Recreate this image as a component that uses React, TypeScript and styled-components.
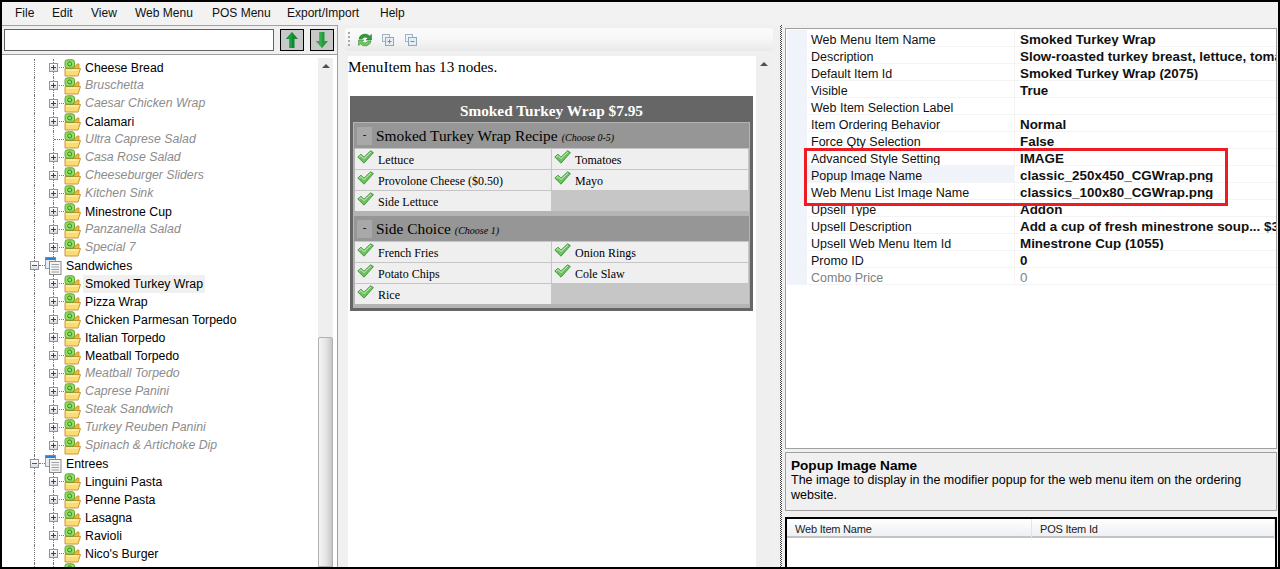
import React from 'react';
import styled, { createGlobalStyle } from 'styled-components';

const GlobalStyle = createGlobalStyle`
  html, body {
    margin: 0;
    padding: 0;
    background: #000;
  }
  * {
    box-sizing: border-box;
  }
`;

const uiFont = `'Liberation Sans', Arial, sans-serif`;
const serifFont = `'Liberation Serif', 'Times New Roman', serif`;

const Window = styled.div`
  width: 1280px;
  height: 569px;
  border: 2px solid #000;
  background: #f0f0f0;
  display: flex;
  flex-direction: column;
  overflow: hidden;
  font-family: ${uiFont};
  font-size: 12px;
  color: #000;
`;

const MenuBar = styled.div`
  flex: none;
  height: 23px;
  display: flex;
  align-items: center;
  padding: 0 0 2px 13px;
  background: #f2f2f2;
`;

const MenuLabel = styled.span<{ $w: number }>`
  width: ${(p) => p.$w}px;
  font-size: 12px;
  color: #111;
`;

const Main = styled.div`
  flex: 1;
  min-height: 0;
  display: flex;
`;

const LeftPane = styled.div`
  flex: none;
  width: 336px;
  display: flex;
  flex-direction: column;
  border-top: 1px solid #a0a0a0;
  border-right: 1px solid #a0a0a0;
  background: #fff;
`;

const SearchRow = styled.div`
  flex: none;
  height: 29px;
  display: flex;
  align-items: flex-start;
  padding: 3px 0 0 2px;
  background: #f0f0f0;
  border-bottom: 1px solid #a0a0a0;
`;

const SearchInput = styled.div`
  width: 270px;
  height: 22px;
  background: #fff;
  border: 1px solid #646464;
`;

const ArrowButton = styled.button<{ $gap: number }>`
  width: 24px;
  height: 22px;
  margin-left: ${(p) => p.$gap}px;
  padding: 0;
  display: flex;
  align-items: center;
  justify-content: center;
  background: #c8c8c8;
  border: 1px solid #000;
`;

const TreeArea = styled.div`
  flex: 1;
  min-height: 0;
  display: flex;
  overflow: hidden;
  padding-top: 3px;
  padding-right: 4px;
`;

const Tree = styled.div`
  flex: 1;
  min-width: 0;
  position: relative;
  overflow: hidden;
  padding-top: 1px;
`;

const TreeRow = styled.div<{ $group?: boolean }>`
  position: relative;
  height: 18px;
  display: flex;
  align-items: center;
  padding-left: ${(p) => (p.$group ? 43 : 62)}px;

  /* vertical connector of the root branch */
  &::before {
    content: '';
    position: absolute;
    left: 32px;
    top: 0;
    bottom: 0;
    border-left: 1px dotted #777;
  }

  /* vertical connector of the child branch */
  &::after {
    content: '';
    position: absolute;
    left: 51px;
    top: 0;
    bottom: 0;
    border-left: 1px dotted #777;
    display: ${(p) => (p.$group ? 'none' : 'block')};
  }
`;

const Expander = styled.span<{ $group?: boolean }>`
  position: absolute;
  z-index: 1;
  left: ${(p) => (p.$group ? 28 : 47)}px;
  top: 4px;
  width: 9px;
  height: 9px;
  background: linear-gradient(#fff, #d9dde4);
  border: 1px solid #949494;

  &::before {
    content: '';
    position: absolute;
    left: 1px;
    top: 3px;
    width: 5px;
    height: 1px;
    background: ${(p) => (p.$group ? '#555' : '#2b3f7a')};
  }
`;

const ExpanderPlus = styled.span`
  position: absolute;
  left: 3px;
  top: 1px;
  width: 1px;
  height: 5px;
  background: #2b3f7a;
`;

const Stub = styled.span<{ $group?: boolean }>`
  position: absolute;
  left: ${(p) => (p.$group ? 37 : 52)}px;
  top: 8px;
  width: ${(p) => (p.$group ? 6 : 10)}px;
  border-top: 1px dotted #777;
`;

const ItemLabel = styled.span<{ $off?: boolean; $selected?: boolean }>`
  margin-left: 2px;
  height: 18px;
  line-height: ${(p) => (p.$off ? 16 : 18)}px;
  padding: 0 2px;
  white-space: nowrap;
  font-size: 12.3px;
  font-style: ${(p) => (p.$off ? 'italic' : 'normal')};
  color: ${(p) => (p.$off ? '#8c8c8c' : '#000')};
  background: ${(p) => (p.$selected ? '#f0f0f0' : 'transparent')};
  position: relative;
  z-index: 1;
`;

const IconSlot = styled.span`
  width: 17px;
  height: 18px;
  display: block;
  position: relative;
  z-index: 1;
  flex: none;
`;

const VScroll = styled.div`
  flex: none;
  width: 15px;
  position: relative;
  background: #efefef;
`;

const ScrollArrow = styled.span`
  position: absolute;
  left: 4px;
  top: 6px;
  width: 0;
  height: 0;
  border-left: 4px solid transparent;
  border-right: 4px solid transparent;
  border-bottom: 4px solid #505050;
`;

const ScrollThumb = styled.span<{ $top: number }>`
  position: absolute;
  left: 0;
  right: 0;
  top: ${(p) => p.$top}px;
  bottom: 0;
  background: linear-gradient(90deg, #f4f4f4, #e4e4e4 55%, #c6c6c6);
  border: 1px solid #b0b0b0;
  border-radius: 2px 2px 0 0;
`;

const CenterPane = styled.div`
  flex: none;
  width: 442px;
  display: flex;
  flex-direction: column;
  padding: 3px 7px 0 7px;
  background: #f0f0f0;
`;

const ToolBar = styled.div`
  flex: none;
  width: 428px;
  height: 23px;
  display: flex;
  align-items: center;
  gap: 8px;
  padding-left: 3px;
  border-radius: 3px;
  background: linear-gradient(#fbfbfb, #f6f6f6 50%, #e9e9e9);
`;

const Grip = styled.span`
  width: 2px;
  height: 15px;
  margin-right: -1px;
  background: repeating-linear-gradient(#a8a8a8 0 2px, transparent 2px 4px);
`;

const ToolIcon = styled.svg<{ $gap?: number }>`
  flex: none;
  margin-left: ${(p) => p.$gap ?? 0}px;
`;

const CenterBody = styled.div`
  flex: 1;
  min-height: 0;
  display: flex;
  margin: 5px 0 0 3px;
  width: 423px;
`;

const Preview = styled.div`
  flex: 1;
  min-width: 0;
  padding: 2px 3px 0 0;
  background: #fff;
  font-family: ${serifFont};
`;

const NodeCount = styled.div`
  font-size: 15.2px;
  line-height: 18px;
  margin-bottom: 20px;
`;

const MenuCard = styled.div`
  margin-left: 2px;
  border: 3px solid #666;
  background: #b4b4b4;
`;

const CardTitle = styled.div`
  height: 26px;
  margin: -3px -3px 0;
  background: #666;
  color: #fff;
  font-weight: 700;
  font-size: 15.3px;
  line-height: 29px;
  text-align: center;
`;

const GroupHead = styled.div`
  height: 26px;
  margin: 0 1px;
  display: flex;
  align-items: center;
  gap: 4px;
  padding-left: 3px;
  background: #969696;
  border-top: 1px solid #b4b4b4;
`;

const Collapse = styled.span`
  width: 15px;
  height: 18px;
  background: #a8a8a8;
  text-align: center;
  font-size: 11px;
  line-height: 14px;
`;

const GroupTitle = styled.span`
  font-size: 15.4px;
  color: #000;
`;

const GroupNote = styled.span`
  font-size: 10px;
  font-style: italic;
  margin-left: 4px;
`;

const ChoiceGrid = styled.div`
  display: grid;
  grid-template-columns: 196px 196px;
  gap: 1px;
  margin: 0 1px 4px 2px;
  padding-top: 1px;
  background: #c6c6c6;
`;

const Choice = styled.div`
  height: 20px;
  display: flex;
  align-items: center;
  gap: 4px;
  padding: 2px 0 0 2px;
  background: #efefef;
  font-size: 12px;
`;

const SplitBar = styled.div`
  flex: none;
  width: 2px;
  background: repeating-conic-gradient(#444 0 25%, #fff 0 50%) 0 0 / 2px 2px;
`;

const RightPane = styled.div`
  flex: 1;
  min-width: 0;
  display: flex;
  flex-direction: column;
  padding: 3px 1px 0 3px;
  background: #f0f0f0;
`;

const PropGridBox = styled.div`
  flex: none;
  position: relative;
  height: 421px;
  padding: 1px 0 0 1px;
  background: #fff;
  border: 1px solid #a0a0a0;
  overflow: hidden;
`;

const PropRow = styled.div`
  display: grid;
  grid-template-columns: 20px 208px 1fr;
  height: 17px;
`;

const PropGutter = styled.span`
  background: #f0f3fa;
`;

const PropName = styled.span<{ $active?: boolean; $off?: boolean }>`
  padding-left: 4px;
  font-size: 12.5px;
  line-height: 20px;
  height: 17px;
  overflow: hidden;
  white-space: nowrap;
  color: ${(p) => (p.$off ? '#7f7f7f' : '#111')};
  background: ${(p) => (p.$active ? '#f0f3fa' : '#fff')};
  border-right: 1px solid #f4f4f4;
  border-bottom: 1px solid #f4f4f4;
`;

const PropValue = styled.span<{ $off?: boolean }>`
  padding-left: 5px;
  font-size: 13.4px;
  line-height: 20px;
  height: 17px;
  white-space: nowrap;
  overflow: hidden;
  font-weight: ${(p) => (p.$off ? 400 : 700)};
  color: ${(p) => (p.$off ? '#7f7f7f' : '#111')};
  border-bottom: 1px solid #f4f4f4;
`;

const Highlight = styled.div`
  position: absolute;
  left: 18px;
  top: 119px;
  width: 424px;
  height: 58px;
  border: 3px solid #ed1c24;
  pointer-events: none;
`;

const HelpPanel = styled.div`
  flex: none;
  height: 59px;
  margin-top: 3px;
  padding: 5px 5px 0 5px;
  background: #f0f0f0;
  border: 1px solid #a0a0a0;
  font-size: 12.5px;
  line-height: 15px;
`;

const HelpTitle = styled.div`
  font-weight: 700;
  font-size: 13.6px;
`;

const ItemTable = styled.div`
  flex: none;
  height: 60px;
  margin-top: 6px;
  background: #fff;
  border: 2px solid #000;
  border-bottom: 0;
`;

const TableHead = styled.div`
  display: grid;
  grid-template-columns: 245px 1fr;
  height: 19px;
  background: linear-gradient(#fff, #f6f7f9 50%, #eef0f3);
  border-bottom: 2px solid #c4c4c4;
  font-size: 11px;
  letter-spacing: -0.2px;
  line-height: 20px;
`;

const HeadCell = styled.span`
  padding-left: 8px;
  border-right: 1px solid #e2e4e8;
  color: #222;
`;

const UpArrow = () => (
  <svg width="16" height="18" viewBox="0 0 16 18">
    <path d="M8 1 L14 8 H10.5 V17 H5.5 V8 H2 Z" fill="#0f8a33" />
    <path d="M8 1 L8 17 H5.5 V8 H2 Z" fill="#15a03d" />
  </svg>
);

const DownArrow = () => (
  <svg width="16" height="18" viewBox="0 0 16 18">
    <path d="M5.5 1 H10.5 V10 H14 L8 17 L2 10 H5.5 Z" fill="#249a3c" />
    <path d="M5.5 1 H8 V17 L2 10 H5.5 Z" fill="#2fae47" />
  </svg>
);

const FolderIcon = () => (
  <svg width="17" height="18" viewBox="0 0 17 18" style={{ display: 'block' }}>
    <path d="M2 7 H12 L13 5 H15 V10 H2 Z" fill="#f0b93a" stroke="#c08a22" strokeWidth="0.8" />
    <path d="M1 9.5 H16.5 L14 17 H1 Z" fill="#fbdc74" stroke="#c48f28" strokeWidth="0.9" />
    <path d="M2 11 H14.5" stroke="#fff3c4" strokeWidth="1" />
    <rect x="1" y="0.8" width="9.5" height="8.4" rx="2.4" fill="#93e063" stroke="#4f9a2c" strokeWidth="0.9" />
    <path d="M7.6 6.8 H5 A2 2 0 1 1 7.6 4.8 V6" fill="none" stroke="#2f7a1a" strokeWidth="0.9" />
  </svg>
);

const GroupIcon = () => (
  <svg width="17" height="18" viewBox="0 0 17 18" style={{ display: 'block' }}>
    <rect x="0.5" y="0.5" width="10" height="11" fill="#e6edf5" stroke="#8ea2b8" />
    <rect x="0.5" y="0.5" width="10" height="2.5" fill="#2f7fcc" />
    <rect x="4.5" y="4.5" width="11.5" height="13" fill="#f4f4f4" stroke="#8a8a8a" />
    <path d="M6.5 7.5 H14 M6.5 10 H14 M6.5 12.5 H14 M6.5 15 H14" stroke="#a0a0a0" />
  </svg>
);

const RefreshIcon = () => (
  <ToolIcon width="16" height="16" viewBox="0 0 16 16">
    <path d="M2 7 A6 5.5 0 0 1 12.5 4 L14.5 2.5 V8 H9 L11 6.2 A3.8 3.5 0 0 0 5 7 Z" fill="#2f9e3a" stroke="#1d6e28" strokeWidth="0.5" />
    <path d="M14 9 A6 5.5 0 0 1 3.5 12 L1.5 13.5 V8 H7 L5 9.8 A3.8 3.5 0 0 0 11 9 Z" fill="#6fcb5a" stroke="#2a7f33" strokeWidth="0.5" />
  </ToolIcon>
);

const StackIcon = ({ plus, gap }: { plus?: boolean; gap: number }) => (
  <ToolIcon width="12" height="12" viewBox="0 0 12 12" $gap={gap}>
    <rect x="0.5" y="0.5" width="7" height="7" fill="#eef4f8" stroke="#9fb5bf" />
    <rect x="3.5" y="3.5" width="8" height="8" fill="#e4eef4" stroke="#8fa9b6" />
    <path d={plus ? 'M5.5 7.5 H9.5 M7.5 5.5 V9.5' : 'M5.5 7.5 H9.5'} stroke="#6f93a6" />
  </ToolIcon>
);

const CheckIcon = () => (
  <svg width="17" height="14" viewBox="0 0 17 14" style={{ flex: 'none', marginTop: -6 }}>
    <path d="M0.8 7 L4 4.2 L7 7.2 L13.6 0.8 L16.4 2.6 L7 13.2 Z" fill="#6cc35e" stroke="#3f8f3f" strokeWidth="0.9" />
    <path d="M2.2 7 L4 5.6 L7 8.6 L13.9 2" fill="none" stroke="#d4f2ca" strokeWidth="1" />
  </svg>
);

type TreeNode = { label: string; off?: boolean; group?: boolean; leaf?: boolean; selected?: boolean };

const treeNodes: TreeNode[] = [
  { label: 'Cheese Bread' },
  { label: 'Bruschetta', off: true },
  { label: 'Caesar Chicken Wrap', off: true },
  { label: 'Calamari' },
  { label: 'Ultra Caprese Salad', off: true, leaf: true },
  { label: 'Casa Rose Salad', off: true },
  { label: 'Cheeseburger Sliders', off: true },
  { label: 'Kitchen Sink', off: true },
  { label: 'Minestrone Cup' },
  { label: 'Panzanella Salad', off: true },
  { label: 'Special 7', off: true },
  { label: 'Sandwiches', group: true },
  { label: 'Smoked Turkey Wrap', selected: true },
  { label: 'Pizza Wrap' },
  { label: 'Chicken Parmesan Torpedo' },
  { label: 'Italian Torpedo' },
  { label: 'Meatball Torpedo' },
  { label: 'Meatball Torpedo', off: true },
  { label: 'Caprese Panini', off: true },
  { label: 'Steak Sandwich', off: true },
  { label: 'Turkey Reuben Panini', off: true },
  { label: 'Spinach & Artichoke Dip', off: true },
  { label: 'Entrees', group: true },
  { label: 'Linguini Pasta' },
  { label: 'Penne Pasta' },
  { label: 'Lasagna' },
  { label: 'Ravioli' },
  { label: "Nico's Burger" },
  { label: '' },
];

const menus: [string, number][] = [
  ['File', 37],
  ['Edit', 39],
  ['View', 44],
  ['Web Menu', 77],
  ['POS Menu', 75],
  ['Export/Import', 93],
  ['Help', 40],
];

const props: { name: string; value: string; active?: boolean; off?: boolean }[] = [
  { name: 'Web Menu Item Name', value: 'Smoked Turkey Wrap' },
  { name: 'Description', value: 'Slow-roasted turkey breast, lettuce, toma' },
  { name: 'Default Item Id', value: 'Smoked Turkey Wrap (2075)' },
  { name: 'Visible', value: 'True' },
  { name: 'Web Item Selection Label', value: '' },
  { name: 'Item Ordering Behavior', value: 'Normal' },
  { name: 'Force Qty Selection', value: 'False' },
  { name: 'Advanced Style Setting', value: 'IMAGE' },
  { name: 'Popup Image Name', value: 'classic_250x450_CGWrap.png', active: true },
  { name: 'Web Menu List Image Name', value: 'classics_100x80_CGWrap.png' },
  { name: 'Upsell Type', value: 'Addon' },
  { name: 'Upsell Description', value: 'Add a cup of fresh minestrone soup... $3' },
  { name: 'Upsell Web Menu Item Id', value: 'Minestrone Cup (1055)' },
  { name: 'Promo ID', value: '0' },
  { name: 'Combo Price', value: '0', off: true },
];

const groups = [
  {
    title: 'Smoked Turkey Wrap Recipe',
    note: '(Choose 0-5)',
    items: ['Lettuce', 'Tomatoes', 'Provolone Cheese ($0.50)', 'Mayo', 'Side Lettuce'],
  },
  {
    title: 'Side Choice',
    note: '(Choose 1)',
    items: ['French Fries', 'Onion Rings', 'Potato Chips', 'Cole Slaw', 'Rice'],
  },
];

export default function App() {
  return (
    <>
      <GlobalStyle />
      <Window>
        <MenuBar>
          {menus.map(([label, w]) => (
            <MenuLabel key={label} $w={w}>
              {label}
            </MenuLabel>
          ))}
        </MenuBar>
        <Main>
          <LeftPane>
            <SearchRow>
              <SearchInput />
              <ArrowButton $gap={6} type="button">
                <UpArrow />
              </ArrowButton>
              <ArrowButton $gap={6} type="button">
                <DownArrow />
              </ArrowButton>
            </SearchRow>
            <TreeArea>
              <Tree>
                {treeNodes.map((node, i) => (
                  <TreeRow key={i} $group={node.group}>
                    {!node.leaf && (
                      <Expander $group={node.group}>{!node.group && <ExpanderPlus />}</Expander>
                    )}
                    <Stub $group={node.group} />
                    <IconSlot>{node.group ? <GroupIcon /> : <FolderIcon />}</IconSlot>
                    {node.label && (
                      <ItemLabel $off={node.off} $selected={node.selected}>
                        {node.label}
                      </ItemLabel>
                    )}
                  </TreeRow>
                ))}
              </Tree>
              <VScroll>
                <ScrollArrow />
                <ScrollThumb $top={279} />
              </VScroll>
            </TreeArea>
          </LeftPane>
          <CenterPane>
            <ToolBar>
              <Grip />
              <RefreshIcon />
              <StackIcon plus gap={1} />
              <StackIcon gap={3} />
            </ToolBar>
            <CenterBody>
              <Preview>
                <NodeCount>MenuItem has 13 nodes.</NodeCount>
                <MenuCard>
                  <CardTitle>Smoked Turkey Wrap $7.95</CardTitle>
                  {groups.map((group) => (
                    <React.Fragment key={group.title}>
                      <GroupHead>
                        <Collapse>-</Collapse>
                        <GroupTitle>
                          {group.title}
                          <GroupNote>{group.note}</GroupNote>
                        </GroupTitle>
                      </GroupHead>
                      <ChoiceGrid>
                        {group.items.map((item) => (
                          <Choice key={item}>
                            <CheckIcon />
                            {item}
                          </Choice>
                        ))}
                      </ChoiceGrid>
                    </React.Fragment>
                  ))}
                </MenuCard>
              </Preview>
              <VScroll>
                <ScrollArrow />
              </VScroll>
            </CenterBody>
          </CenterPane>
          <SplitBar />
          <RightPane>
            <PropGridBox>
              {props.map((row) => (
                <PropRow key={row.name}>
                  <PropGutter />
                  <PropName $active={row.active} $off={row.off}>
                    {row.name}
                  </PropName>
                  <PropValue $off={row.off}>{row.value}</PropValue>
                </PropRow>
              ))}
              <Highlight />
            </PropGridBox>
            <HelpPanel>
              <HelpTitle>Popup Image Name</HelpTitle>
              The image to display in the modifier popup for the web menu item on the ordering website.
            </HelpPanel>
            <ItemTable>
              <TableHead>
                <HeadCell>Web Item Name</HeadCell>
                <HeadCell>POS Item Id</HeadCell>
              </TableHead>
            </ItemTable>
          </RightPane>
        </Main>
      </Window>
    </>
  );
}
